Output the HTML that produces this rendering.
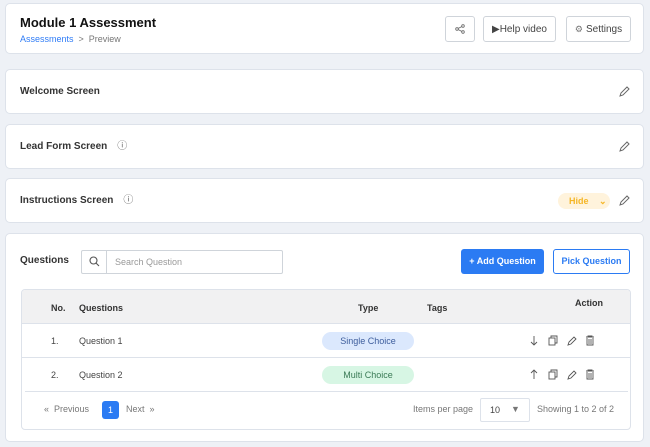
<!DOCTYPE html>
<html><head><style>
*{box-sizing:border-box;margin:0;padding:0}
body{width:650px;height:447px;background:#eef1f6;font-family:"Liberation Sans",sans-serif;color:#222;position:relative;overflow:hidden}
.card{position:absolute;left:5px;width:639px;background:#fff;border:1px solid #dde2ea;border-radius:5px}
.t{position:absolute;font-size:10px;font-weight:bold;color:#333;display:flex;align-items:center;height:12px;line-height:12px}
.t span{font-weight:normal;color:#666;font-size:10px;margin-left:10px;line-height:12px}
.btn{position:absolute;top:12px;height:26px;border:1px solid #cfd4da;border-radius:3px;font-size:10px;color:#444;display:flex;align-items:center;justify-content:center;gap:3px}
.pen{position:absolute;right:13px}
.th{position:absolute;font-size:9px;font-weight:bold;color:#333}
.td{position:absolute;font-size:9px;color:#444}
.pill{position:absolute;left:300px;width:92px;height:18px;border-radius:9px;font-size:9px;display:flex;align-items:center;justify-content:center}
.ic{position:absolute;font-size:10px;color:#555}
</style></head><body>
<div class="card" style="top:3px;height:51px">
 <div style="position:absolute;left:14px;top:11px;font-size:13px;font-weight:bold;color:#111">Module 1 Assessment</div>
 <div style="position:absolute;left:14px;top:30px;font-size:9px;color:#777"><span style="color:#2f7cf6">Assessments</span> &nbsp;&gt;&nbsp; Preview</div>
 <div class="btn" style="left:439px;width:30px"><svg width="10" height="10" viewBox="0 0 10 10" fill="none" stroke="#666" stroke-width=".8"><circle cx="2" cy="5" r="1.3"/><circle cx="8" cy="2" r="1.3"/><circle cx="8" cy="8" r="1.3"/><path d="M3 4.5L7 2.5M3 5.5L7 7.5"/></svg></div>
 <div class="btn" style="left:477px;width:73px">&#9654;Help video</div>
 <div class="btn" style="left:560px;width:65px"><span style="font-size:9px;color:#777">&#9881;</span>Settings</div>
</div>
<div class="card" style="top:69px;height:45px"><div class="t" style="left:14px;top:16px">Welcome Screen</div><svg class="pen" style="top:16px" width="11" height="11" viewBox="0 0 11 11" fill="none" stroke="#666"><path d="M1 10L2 7L8 1L10 3L4 9Z"/></svg></div>
<div class="card" style="top:124px;height:45px"><div class="t" style="left:14px;top:16px">Lead Form Screen<span>&#9432;</span></div><svg class="pen" style="top:16px" width="11" height="11" viewBox="0 0 11 11" fill="none" stroke="#666"><path d="M1 10L2 7L8 1L10 3L4 9Z"/></svg></div>
<div class="card" style="top:178px;height:45px"><div class="t" style="left:14px;top:16px">Instructions Screen<span>&#9432;</span></div>
 <div style="position:absolute;left:552px;top:14px;width:52px;height:16px;border-radius:8px;background:#fff3dc;color:#f5b626;font-size:9px;font-weight:bold;padding-left:11px;line-height:16px">Hide <span style="margin-left:8px">&#8964;</span></div>
 <svg class="pen" style="top:16px" width="11" height="11" viewBox="0 0 11 11" fill="none" stroke="#666"><path d="M1 10L2 7L8 1L10 3L4 9Z"/></svg></div>
<div class="card" style="top:233px;height:209px">
 <div class="t" style="left:14px;top:21px;font-size:10px">Questions</div>
 <div style="position:absolute;left:75px;top:16px;width:202px;height:24px;border:1px solid #cfd4da;border-radius:2px">
  <div style="position:absolute;left:0;top:0;width:25px;height:22px;border-right:1px solid #cfd4da"><svg style="margin:5px 7px" width="11" height="11" viewBox="0 0 11 11" fill="none" stroke="#555" stroke-width="1.1"><circle cx="4.5" cy="4.5" r="3.5"/><path d="M7 7L10 10"/></svg></div>
  <div style="position:absolute;left:33px;top:6px;font-size:9px;color:#999">Search Question</div>
 </div>
 <div style="position:absolute;left:455px;top:15px;width:83px;height:25px;background:#2b7bf3;border-radius:3px;color:#fff;font-size:9px;font-weight:bold;text-align:center;line-height:25px">+ Add Question</div>
 <div style="position:absolute;left:547px;top:15px;width:77px;height:25px;border:1px solid #2b7bf3;border-radius:3px;color:#2b7bf3;font-size:9px;font-weight:bold;text-align:center;line-height:23px">Pick Question</div>
 <div style="position:absolute;left:15px;top:55px;width:610px;height:141px;border:1px solid #dde2ea;border-radius:4px;overflow:hidden">
  <div style="position:absolute;left:0;top:0;width:100%;height:34px;background:#f1f1f2;border-bottom:1px solid #dde2ea"></div>
  <div class="th" style="left:29px;top:13px">No.</div><div class="th" style="left:57px;top:13px">Questions</div><div class="th" style="left:336px;top:13px">Type</div><div class="th" style="left:405px;top:13px">Tags</div><div class="th" style="left:553px;top:8px">Action</div>
  <div class="td" style="left:29px;top:46px">1.</div><div class="td" style="left:57px;top:46px">Question 1</div>
  <div class="pill" style="top:42px;background:#dbe8fd;color:#3d5d9c">Single Choice</div>
  <div style="position:absolute;left:0;top:67px;width:100%;border-top:1px solid #dde2ea"></div>
  <div class="td" style="left:29px;top:80px">2.</div><div class="td" style="left:57px;top:80px">Question 2</div>
  <div class="pill" style="top:76px;background:#d7f6e4;color:#3a7a55">Multi Choice</div>
  <div style="position:absolute;left:3px;top:101px;width:603px;border-top:1px solid #dde2ea"></div>
  <svg style="position:absolute;left:508px;top:45px" width="8" height="11" viewBox="0 0 8 11" fill="none" stroke="#555" stroke-width=".9"><path d="M4 1V10M1 7L4 10L7 7"/></svg>
  <svg style="position:absolute;left:508px;top:79px" width="8" height="11" viewBox="0 0 8 11" fill="none" stroke="#555" stroke-width=".9"><path d="M4 10V1M1 4L4 1L7 4"/></svg>
  <svg style="position:absolute;left:526px;top:45px" width="50" height="11" viewBox="0 0 50 11" fill="none" stroke="#555" stroke-width=".9"><rect x="1" y="3" width="6" height="7"/><path d="M3 3V1H9V8H7"/><path d="M20 10L21 7L26 2L28 4L23 9Z"/><path d="M38 2H46M40 2V1H44V2M39 3V10H45V3M41 4V9M43 4V9"/></svg>
  <svg style="position:absolute;left:526px;top:79px" width="50" height="11" viewBox="0 0 50 11" fill="none" stroke="#555" stroke-width=".9"><rect x="1" y="3" width="6" height="7"/><path d="M3 3V1H9V8H7"/><path d="M20 10L21 7L26 2L28 4L23 9Z"/><path d="M38 2H46M40 2V1H44V2M39 3V10H45V3M41 4V9M43 4V9"/></svg>
  <div class="td" style="left:22px;top:114px;color:#777">&laquo;&nbsp; Previous</div>
  <div style="position:absolute;left:80px;top:111px;width:17px;height:18px;background:#2b7bf3;border-radius:3px;color:#fff;font-size:9px;text-align:center;line-height:18px">1</div>
  <div class="td" style="left:104px;top:114px;color:#777">Next &nbsp;&raquo;</div>
  <div class="td" style="left:391px;top:114px;color:#777">Items per page</div>
  <div style="position:absolute;left:458px;top:108px;width:50px;height:24px;border:1px solid #dde2ea;border-radius:2px;font-size:9px;color:#444;padding:6px 0 0 9px">10 <span style="position:absolute;left:30px;top:5px;color:#777">&#9660;</span></div>
  <div class="td" style="left:515px;top:114px;color:#777">Showing 1 to 2 of 2</div>
 </div>
</div>
</body></html>
